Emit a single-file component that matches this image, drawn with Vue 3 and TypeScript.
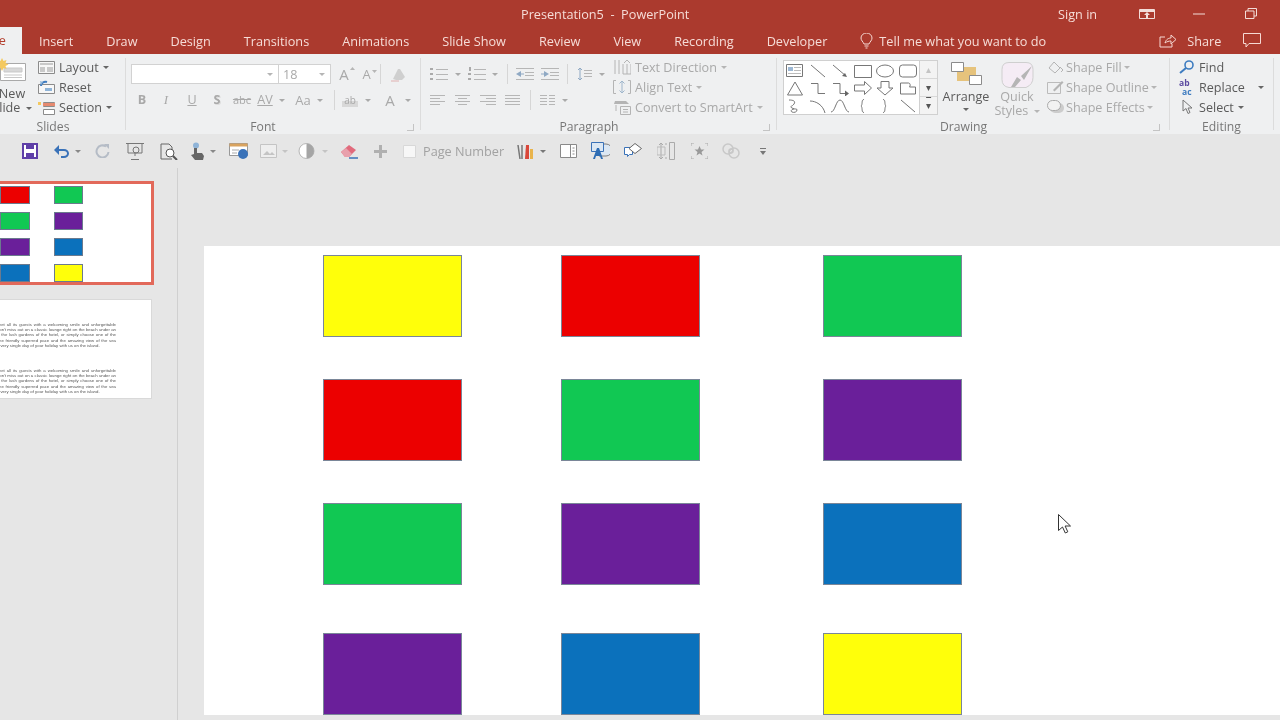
<template>
  <div class="app">
    <!-- title bar -->
    <header class="titlebar">
      <span class="doc-title">Presentation5 &nbsp;-&nbsp; PowerPoint</span>
      <span class="sign-in">Sign in</span>
      <svg class="win-display" width="16" height="10" viewBox="0 0 16 10">
        <path d="M.5.5h15v9H.5z" fill="none" stroke="#f3dcd8" />
        <path d="M1 1h14v2H1zM8 3l3 3H9v3H7V6H5z" fill="#f3dcd8" />
      </svg>
      <svg class="win-min" width="12" height="2" viewBox="0 0 12 2"><path d="M0 1h12" stroke="#f3dcd8" /></svg>
      <svg class="win-restore" width="12" height="11" viewBox="0 0 12 11">
        <path d="M.5 3h8.500v7.500H.5zM3 3V.5h8.500V8H9" fill="none" stroke="#f3dcd8" />
      </svg>
    </header>

    <!-- tabs -->
    <nav class="tabs">
      <span class="tab-file">File</span>
      <span v-for="tab in tabs" :key="tab" class="tab">{{ tab }}</span>
      <span class="tell-me">
        <svg width="13" height="16" viewBox="0 0 13 16">
          <path d="M4 11C3 8.500 1 7.500 1 5a5.500 5 0 0 1 11 0c0 2.500-2 3.500-3 6zM4.500 13h4M5.500 15h2" fill="none" stroke="#f6d9d4" />
        </svg>
        Tell me what you want to do
      </span>
      <span class="share">
        <svg width="18" height="15" viewBox="0 0 18 15">
          <path d="M6 4H1v10h12v-3M6 10c1-4 4-5 6-5V2l5 4.500-5 4.500V8c-2 0-4 .5-6 2z" fill="none" stroke="#f6d9d4" />
        </svg>
        <span>Share</span>
      </span>
      <svg class="comment" width="18" height="15" viewBox="0 0 18 15">
        <path d="M.5.5h17v10H6l-3 3.500v-3.500H.5z" fill="none" stroke="#f6d9d4" />
      </svg>
    </nav>

    <!-- ribbon -->
    <section class="ribbon">
      <div class="group g-slides">
        <div class="body">
          <div class="new-slide">
            <svg width="50" height="26" viewBox="0 0 50 26">
              <path d="M13.500 6.500h25v17h-25z" fill="#fff" stroke="#a9a9a9" />
              <path d="M17 11h18v4H17zM17 18h18M17 20.500h18" fill="#d8d8d8" stroke="#c9c9c9" />
              <path d="M15 1l1.500 3 3-1-1 3 3 1.500-3 1.500 1 3-3-1L15 14l-1.500-3-3 1 1-3-3-1.500 3-1.500-1-3 3 1z" fill="#f4c95f" />
            </svg>
            <span>New</span>
            <span>Slide <i class="caret dark"></i></span>
          </div>
          <div class="stack">
            <div class="line dark">
              <svg width="17" height="13" viewBox="0 0 17 13">
                <path d="M.5.5h16v12H.5z" fill="#f7f7f7" stroke="#8b8b8b" />
                <path d="M2 2h13v2H2zM2 6h5v5H2zM9 6h6v5H9z" fill="#c9c9c9" />
              </svg>
              Layout <i class="caret dark"></i>
            </div>
            <div class="line dark">
              <svg width="17" height="14" viewBox="0 0 17 14">
                <path d="M.5 4.500h16v9H.5z" fill="#f7f7f7" stroke="#8b8b8b" />
                <path d="M3 6c0-3 3-5 6-4" fill="none" stroke="#3e7cc0" stroke-width="2" />
                <path d="M2 1l3 1-2 3zM7 8h7v3H7z" fill="#8fb4d8" />
              </svg>
              Reset
            </div>
            <div class="line dark">
              <svg width="17" height="15" viewBox="0 0 17 15">
                <path d="M5.500 2.500h11v4h-11zM5.500 9.500h11v5h-11z" fill="#fff" stroke="#8b8b8b" />
                <path d="M5 3h12v3H5z" fill="#e68a70" />
                <path d="M0 2h3v3H0z" fill="#f4c95f" />
              </svg>
              Section <i class="caret dark"></i>
            </div>
          </div>
        </div>
        <div class="label">Slides</div>
      </div>

      <div class="group g-font">
        <div class="body rows">
          <div class="row">
            <div class="font-name"><i class="caret"></i></div>
            <div class="font-size">18 <i class="caret"></i></div>
            <template v-for="(t, i) in fontTop" :key="i">
              <span v-if="t.text" class="tool-text" :class="t.cls" :style="cell(t)">{{ t.text }}</span>
              <svg v-else :style="cell(t)" :width="t.w" :height="t.h" :viewBox="`0 0 ${t.w} ${t.h}`" v-html="t.body"></svg>
            </template>
          </div>
          <div class="row">
            <template v-for="(t, i) in fontBottom" :key="i">
              <span v-if="t.text" class="tool-text" :class="t.cls" :style="cell(t)">{{ t.text }}</span>
              <svg v-else :style="cell(t)" :width="t.w" :height="t.h" :viewBox="`0 0 ${t.w} ${t.h}`" v-html="t.body"></svg>
            </template>
          </div>
        </div>
        <div class="label">Font<i class="launcher"></i></div>
      </div>

      <div class="group g-para">
        <div class="body">
          <div class="rows para-left">
            <div class="row">
              <svg v-for="(t, i) in paraTop" :key="i" :style="cell(t)" :width="t.w" :height="t.h" :viewBox="`0 0 ${t.w} ${t.h}`" v-html="t.body"></svg>
            </div>
            <div class="row">
              <svg v-for="(t, i) in paraBottom" :key="i" :style="cell(t)" :width="t.w" :height="t.h" :viewBox="`0 0 ${t.w} ${t.h}`" v-html="t.body"></svg>
            </div>
          </div>
          <div class="stack">
            <div class="line">
              <svg width="18" height="16" viewBox="0 0 18 16">
                <path d="M2 1v14M6 1v14M14 5v10M10 5v10h8V5M11 4l3-3 3 3" fill="none" stroke="#b4b4b4" />
              </svg>
              Text Direction <i class="caret"></i>
            </div>
            <div class="line">
              <svg width="18" height="14" viewBox="0 0 18 14">
                <path d="M3 .5H.5v13H3M15 .5h2.500v13H15" fill="none" stroke="#b4b4b4" />
                <path d="M9 1v12M6.500 3.500L9 1l2.500 2.500M6.500 10.500L9 13l2.500-2.500" fill="none" stroke="#9fb6cc" />
              </svg>
              Align Text <i class="caret"></i>
            </div>
            <div class="line">
              <svg width="18" height="15" viewBox="0 0 18 15">
                <path d="M2 1h11l3 3H1z" fill="#b4b4b4" />
                <path d="M3 5v6M7.500 6.500h10v8h-10zM10 9.500h5M10 12h5" fill="none" stroke="#b4b4b4" />
              </svg>
              Convert to SmartArt <i class="caret"></i>
            </div>
          </div>
        </div>
        <div class="label">Paragraph<i class="launcher"></i></div>
      </div>

      <div class="group g-draw">
        <div class="body">
          <div class="gallery">
            <div class="shapes">
              <svg v-for="(s, i) in shapes" :key="i" width="20" height="16" viewBox="0 0 20 16" v-html="s"></svg>
            </div>
            <div class="scroll">
              <span class="faded">▴</span>
              <span>▾</span>
              <span class="more">▾</span>
            </div>
          </div>
          <div class="big arrange dark">
            <svg width="31" height="23" viewBox="0 0 31 23">
              <path d="M6 5h19v14H6z" fill="#e6c37c" />
              <path d="M.5.5h12v9H.5zM18.500 13.500h12v9h-12z" fill="#fff" stroke="#8b8b8b" />
            </svg>
            <span>Arrange</span>
            <i class="caret dark"></i>
          </div>
          <div class="big quick">
            <svg width="33" height="26" viewBox="0 0 33 26">
              <path d="M8 .5h17q7 0 7 7v8q0 7-7 10H8q-7-1-7-8v-10q0-7 7-7z" fill="#f5ecf5" stroke="#cfcfcf" />
              <path d="M10 25l6-10 4 3-6 7zM20 14l11-10-8 14z" fill="#b5b5b5" />
            </svg>
            <span>Quick</span>
            <span>Styles <i class="caret"></i></span>
          </div>
          <div class="stack shape-opts">
            <div class="line">
              <svg width="17" height="14" viewBox="0 0 17 14">
                <path d="M2 8l5-6 6 6-5 5zM13 7l3 3-2 2" fill="none" stroke="#b4b4b4" />
              </svg>
              Shape Fill <i class="caret"></i>
            </div>
            <div class="line">
              <svg width="17" height="14" viewBox="0 0 17 14">
                <path d="M.5 2.500h13v11H.5z" fill="none" stroke="#bbb" />
                <path d="M6 10l9-9 1.500 1.500-9 9z" fill="#b4b4b4" />
              </svg>
              Shape Outline <i class="caret"></i>
            </div>
            <div class="line">
              <svg width="17" height="14" viewBox="0 0 17 14">
                <rect x="3" y="3" width="14" height="10" rx="5" fill="#ccc" />
                <rect x=".5" y=".5" width="13" height="10" rx="5" fill="#f2f2f2" stroke="#aaa" />
              </svg>
              Shape Effects <i class="caret"></i>
            </div>
          </div>
        </div>
        <div class="label">Drawing<i class="launcher"></i></div>
      </div>

      <div class="group g-edit">
        <div class="body">
          <div class="stack">
            <div class="line dark">
              <svg width="16" height="14" viewBox="0 0 16 14">
                <circle cx="10" cy="5" r="4" fill="none" stroke="#3e7cc0" stroke-width="1.600" />
                <path d="M7 8l-6 5" stroke="#3e7cc0" stroke-width="2" />
              </svg>
              Find
            </div>
            <div class="line dark">
              <span class="ab-icon"><b>ab</b><b>ac</b></span>
              Replace <i class="caret dark replace-caret"></i>
            </div>
            <div class="line dark">
              <svg width="16" height="16" viewBox="0 0 16 16">
                <path d="M4 1v11l3-2.500 2 5 2-1-2-4.500h4z" fill="none" stroke="#777" />
              </svg>
              Select <i class="caret dark"></i>
            </div>
          </div>
        </div>
        <div class="label">Editing</div>
      </div>
    </section>

    <!-- quick access row -->
    <section class="qat">
      <template v-for="(t, i) in qat" :key="i">
        <span v-if="t.text" class="qat-text" :style="cell(t)">{{ t.text }}</span>
        <svg v-else :style="cell(t)" :width="t.w" :height="t.h" :viewBox="`0 0 ${t.w} ${t.h}`" v-html="t.body"></svg>
      </template>
    </section>

    <main class="workspace">
      <aside class="thumbs">
        <div class="thumb active">
          <div class="mini-grid">
            <span v-for="(c, i) in miniColors" :key="i" class="mini" :style="{ background: c }"></span>
          </div>
        </div>
        <div class="thumb second">
          <p>{{ thumbText }}</p>
          <p>{{ thumbText }}</p>
        </div>
      </aside>
      <div class="canvas">
        <div class="slide">
          <div v-for="(c, i) in slideColors" :key="i" class="box" :style="{ background: c }"></div>
        </div>
      </div>
    </main>

    <svg class="cursor" width="15" height="20" viewBox="0 0 15 20">
      <path d="M.5.500v16l4-3.500 2.800 6 2.500-1.200-2.700-5.800h5.400z" fill="#fff" stroke="#333" />
    </svg>
  </div>
</template>

<script setup lang="ts">
interface Tool {
  gap: number
  w: number
  h?: number
  body?: string
  text?: string
  cls?: string
}

const tabs = ['Insert', 'Draw', 'Design', 'Transitions', 'Animations', 'Slide Show', 'Review', 'View', 'Recording', 'Developer']

const G = '#b6b6b6'
const dd = (gap: number, color = '#aaa'): Tool => ({ gap, w: 6, h: 3, body: `<path d="M0 0h6L3 3z" fill="${color}"/>` })
const sep = (gap: number): Tool => ({ gap, w: 1, h: 20, body: '<path d="M.5 0v20" stroke="#d6d6d6"/>' })
const lines = (w: number, ys: number[], color = G) => ys.map((y) => `<path d="M0 ${y}.5h${w}" stroke="${color}"/>`).join('')

const fontTop: Tool[] = [
  { gap: 7, w: 12, text: 'A', cls: 'big-a' },
  { gap: 0, w: 5, h: 16, body: `<path d="M0 4l2.500-3L5 4z" fill="${G}"/>` },
  { gap: 6, w: 11, text: 'A', cls: 'small-a' },
  { gap: 0, w: 5, h: 16, body: `<path d="M0 4h5L2.500 7z" fill="${G}"/>` },
  sep(3),
  { gap: 9, w: 17, h: 15, body: `<path d="M3 12L8 2h2l5 8-3 3H6z" fill="#cfcfcf"/><path d="M1 14h8" stroke="#e0b0b0"/>` },
]

const fontBottom: Tool[] = [
  { gap: 5, w: 12, text: 'B', cls: 'bold' },
  { gap: 12, w: 12, text: 'I', cls: 'ital' },
  { gap: 14, w: 12, text: 'U', cls: 'under' },
  { gap: 13, w: 12, text: 'S', cls: 'shadow' },
  { gap: 9, w: 20, text: 'abc', cls: 'strike' },
  { gap: 5, w: 16, text: 'AV', cls: 'under' },
  dd(6),
  { gap: 8, w: 20, text: 'Aa', cls: 'mid' },
  dd(4),
  sep(11),
  { gap: 7, w: 16, text: 'ab', cls: 'hl' },
  dd(7),
  { gap: 12, w: 14, text: 'A', cls: 'big-a' },
  dd(8),
]

const paraTop: Tool[] = [
  { gap: 0, w: 18, h: 14, body: `<path d="M0 1h3v2H0zM0 6h3v2H0zM0 11h3v2H0z" fill="#aaa"/><path d="M6 2.500h12M6 7.500h12M6 12.500h12" stroke="${G}"/>` },
  dd(7),
  { gap: 7, w: 18, h: 14, body: `<path d="M1 0h2v4H1zM0 6h3v2H0zM0 11h3v2H0z" fill="#aaa"/><path d="M6 2.500h12M6 7.500h12M6 12.500h12" stroke="${G}"/>` },
  dd(6),
  sep(9),
  { gap: 8, w: 18, h: 12, body: `<path d="M0 6l5-3v6z" fill="#8fa9c4"/><path d="M5 6h3" stroke="#8fa9c4"/>` + lines(18, [0, 11]) + `<path d="M9 4.500h9M9 7.500h9" stroke="${G}"/>` },
  { gap: 7, w: 18, h: 12, body: `<path d="M8 6L3 3v6z" fill="#8fa9c4"/><path d="M0 6h3" stroke="#8fa9c4"/>` + lines(18, [0, 11]) + `<path d="M9 4.500h9M9 7.500h9" stroke="${G}"/>` },
  sep(8),
  { gap: 9, w: 15, h: 16, body: `<path d="M3 2v12M1 4l2-2 2 2M1 12l2 2 2-2" fill="none" stroke="#8fa9c4"/><path d="M7 4.500h8M7 7.500h8M7 10.500h8" stroke="${G}"/>` },
  dd(7),
]

const paraBottom: Tool[] = [
  { gap: 0, w: 15, h: 11, body: `<path d="M0 .5h15M0 3.500h10M0 6.500h15M0 9.500h10" stroke="${G}"/>` },
  { gap: 10, w: 15, h: 11, body: `<path d="M0 .5h15M3 3.500h9M0 6.500h15M3 9.500h9" stroke="${G}"/>` },
  { gap: 10, w: 16, h: 11, body: `<path d="M0 .5h16M6 3.500h10M0 6.500h16M6 9.500h10" stroke="${G}"/>` },
  { gap: 9, w: 15, h: 11, body: lines(15, [0, 3, 6, 9]) },
  sep(10),
  { gap: 9, w: 15, h: 11, body: `<path d="M0 .5h7M0 3.500h7M0 6.500h7M0 9.500h7M9 .5h6M9 3.500h6M9 6.500h6M9 9.500h6" stroke="${G}"/>` },
  dd(7),
]

const qat: Tool[] = [
  { gap: 22, w: 16, h: 16, body: '<path d="M1 1h14v14H1z" fill="#fff" stroke="#5f3fa8" stroke-width="2"/><path d="M4 1h8v5H4zM4 10h8v5H4z" fill="#5f3fa8"/>' },
  { gap: 16, w: 16, h: 13, body: '<path d="M3 5h7a4 3.500 0 0 1 0 7H7" fill="none" stroke="#3a72b8" stroke-width="2"/><path d="M0 5l5-5v10z" fill="#3a72b8"/>' },
  dd(5, '#888'),
  { gap: 14, w: 15, h: 14, body: '<path d="M11 2.500A6 6 0 1 0 13.500 8" fill="none" stroke="#b5bcc6" stroke-width="2"/><path d="M9 0h5v5z" fill="#b5bcc6"/>' },
  { gap: 16, w: 18, h: 17, body: '<path d="M0 .5h18M2 1v9h14V1M9 10v3M5 16.500h8" fill="none" stroke="#777"/><circle cx="10" cy="7" r="3" fill="none" stroke="#777"/>' },
  { gap: 16, w: 18, h: 17, body: '<path d="M12 16H1V1h8l3 3v3" fill="none" stroke="#666"/><circle cx="10" cy="10" r="4" fill="#fff" stroke="#555"/><path d="M13 13l4 4" stroke="#555" stroke-width="2"/>' },
  { gap: 11, w: 16, h: 18, body: '<circle cx="7" cy="3.500" r="3" fill="#8fb4d8"/><path d="M5 6h3v5h5l2 3-1 4H6l-4-5 3-1z" fill="#666"/>' },
  dd(5, '#888'),
  { gap: 13, w: 19, h: 16, body: '<path d="M.5.500h18v12H.5z" fill="#fff" stroke="#999"/><path d="M.5.500h18v3H.5z" fill="#d9a35f"/><circle cx="14" cy="11" r="5" fill="#3a72b8"/><path d="M3 7h7M3 10h5" stroke="#aaa"/>' },
  { gap: 12, w: 17, h: 14, body: '<path d="M.5.500h16v13H.5z" fill="#eee" stroke="#c4c4c4"/><path d="M3 11l4-4 3 3 2-2 3 3z" fill="#c4c4c4"/>' },
  dd(5, '#c4c4c4'),
  { gap: 10, w: 17, h: 16, body: '<circle cx="8.500" cy="8" r="7.500" fill="#fff" stroke="#b5b5b5"/><path d="M8.500 .5a7.500 7.500 0 0 1 0 15z" fill="#a5a5a5"/>' },
  dd(7, '#c4c4c4'),
  { gap: 12, w: 18, h: 15, body: '<path d="M1 8l8-7 7 5-7 7H5z" fill="#e16a7c"/><path d="M1 8l4 5h4l3-3-6-6z" fill="#e8a0ac"/><path d="M9 14h9" stroke="#3a72b8" stroke-width="1.500"/>' },
  { gap: 16, w: 13, h: 13, body: '<path d="M5 0h3v5h5v3H8v5H5V8H0V5h5z" fill="#b0b0b0"/>' },
  { gap: 16, w: 13, h: 13, body: '<path d="M.5.500h12v12H.5z" fill="#f7f7f7" stroke="#d8d8d8"/>' },
  { gap: 7, w: 84, text: 'Page Number' },
  { gap: 10, w: 16, h: 17, body: '<path d="M1 2l2 14M5 2v14" stroke="#777" stroke-width="1.500"/><path d="M9 2h3v14H8z" fill="#d9473a"/><path d="M13 6h3v10h-3z" fill="#e9b44c"/>' },
  dd(7, '#777'),
  { gap: 14, w: 17, h: 14, body: '<path d="M.5.500h16v13H.5zM10.500.5v13M12.500 4h2M12.500 7h2M12.500 10h2" fill="#fff" stroke="#8a8a8a"/>' },
  { gap: 14, w: 19, h: 18, body: '<path d="M8 2h7a4 4 0 0 1 0 12H8z" fill="#dbe7f3" stroke="#7f7f7f"/><path d="M.5.500h12v9H.5z" fill="#dbe7f3" stroke="#3a72b8"/><path d="M2 17L6 6h2l4 11h-2l-1-3H5l-1 3z" fill="#2e6db4"/>' },
  { gap: 14, w: 18, h: 16, body: '<path d="M.5 4.500h8v7h-3l-2 2v-2h-3z" fill="#fff" stroke="#3a72b8"/><path d="M11 .5l6.500 5-6.500 5-6-5z" fill="#fff" stroke="#666"/>' },
  { gap: 15, w: 18, h: 18, body: '<path d="M4 1v16M2 3l2-2 2 2M2 15l2 2 2-2M8 2h2M8 16h2M12.500.5h5v17h-5z" fill="none" stroke="#aaa"/><path d="M0 5h8v8H0z" fill="none" stroke="#bbb"/>' },
  { gap: 16, w: 17, h: 16, body: '<path d="M0 3V0h3M14 0h3v3M0 13v3h3M14 16h3v-3" fill="none" stroke="#aaa"/><path d="M8.500 3l1.500 3.500h3.500l-3 2.500 1 3.500-3-2-3 2 1-3.500-3-2.500H7z" fill="#999"/>' },
  { gap: 14, w: 18, h: 16, body: '<g fill="none" stroke="#c8c8c8" stroke-width="1.500"><circle cx="6" cy="6" r="5"/><circle cx="12" cy="10" r="5"/><circle cx="9" cy="8" r="2"/></g>' },
  { gap: 20, w: 6, h: 7, body: '<path d="M0 .5h6" stroke="#777"/><path d="M0 3h6L3 7z" fill="#777"/>' },
]

const S = 'fill="none" stroke="#777"'
const shapes: string[] = [
  '<path d="M1.500 1.500h16v12h-16z" fill="#fff" stroke="#777"/><path d="M3 4h5v4H3z" fill="#9db8d4"/><path d="M9 4.500h7M9 7.500h7M3 10.500h13" stroke="#bbb"/>',
  `<path d="M3 2l14 12" ${S}/>`,
  `<path d="M3 2l13 11" ${S}/><path d="M17 14l-5-1 3-3z" fill="#666"/>`,
  `<path d="M1.500 2.500h17v12h-17z" ${S}/>`,
  `<ellipse cx="10" cy="8" rx="8.500" ry="6" ${S}/>`,
  `<rect x="1.500" y="2" width="17" height="12" rx="3" ${S}/>`,
  `<path d="M10 2l7.500 13h-15z" ${S}/>`,
  `<path d="M3 3.500h7v10h7" ${S}/>`,
  `<path d="M3 3.500h7v10h6" ${S}/><path d="M19 13.500l-4-3v6z" fill="#666"/>`,
  `<path d="M1.500 5h10V1.500L18.500 8l-7 6.500V11h-10z" ${S}/>`,
  `<path d="M6 1.500h8V8h4l-8 7-8-7h4z" ${S}/>`,
  `<path d="M2.500 14V3h8c2 0 2 3 1 4h6v7z" ${S}/>`,
  `<path d="M4 2c4 0 7 1 5 4S4 8 7 10s5 0 5 2-3 3-5 2 0-3 2-3" ${S}/>`,
  `<path d="M2 3c6 0 13 4 15 12" ${S}/>`,
  `<path d="M1 14C5 14 6 2 10 2s5 12 9 12" ${S}/>`,
  `<path d="M11 1.500c-3 0-1 5-3 6.500 2 1.500 0 6.500 3 6.500" ${S}/>`,
  `<path d="M8 1.500c3 0 1 5 3 6.500-2 1.500 0 6.500-3 6.500" ${S}/>`,
  `<path d="M3 2l14 12" ${S}/>`,
]

function cell(t: Tool) {
  return { marginLeft: `${t.gap}px`, width: `${t.w}px` }
}

const R = '#ec0000'
const Gn = '#11c853'
const P = '#6a1f9a'
const B = '#0b71bc'
const Y = '#ffff0a'
const miniColors = [R, Gn, Gn, P, P, B, B, Y]
const slideColors = [Y, R, Gn, R, Gn, P, Gn, P, B, P, B, Y]

const thumbText =
  'Our friendly hotel staff will greet all its guests with a welcoming smile and unforgettable Greek hospitality. As a guest don\'t miss out on a classic lounge right on the beach under an umbrella, take a stroll through the lush gardens of the hotel, or simply choose one of the many quiet corners to enjoy the friendly superred pace and the amazing view of the sea from your own private terrace every single day of your holiday with us on the island.'
</script>

<style scoped>
.app {
  position: relative;
  width: 1280px;
  height: 720px;
  overflow: hidden;
  background: #e6e6e6;
  font-family: "Open Sans", "Liberation Sans", sans-serif;
  font-size: 12.6px;
  color: #a9a9a9;
  filter: blur(0.35px);
}
svg {
  flex: none;
  display: block;
}

.titlebar {
  display: flex;
  align-items: center;
  height: 27px;
  padding-left: 521px;
  background: #ab3a2e;
  color: #f6dcd7;
  font-size: 12.7px;
}
.doc-title {
  width: 537px;
}
.sign-in {
  width: 81px;
}
.win-min {
  margin-left: 38px;
}
.win-restore {
  margin-left: 40px;
}

.tabs {
  display: flex;
  align-items: center;
  height: 27px;
  background: #ab3a2e;
  color: #f6dcd7;
  font-size: 12.7px;
}
.tab-file {
  width: 40px;
  height: 27px;
  margin: 0 17px 0 -18px;
  padding-top: 4px;
  box-sizing: border-box;
  text-align: right;
  padding-right: 16px;
  background: #eff0f1;
  color: #b4402f;
}
.tab {
  margin-right: 33px;
}
.tell-me {
  display: flex;
  align-items: center;
  gap: 6px;
  width: 299px;
}
.share {
  display: flex;
  align-items: center;
  gap: 10px;
  width: 84px;
}

.ribbon {
  display: flex;
  height: 80px;
  background: #eff0f1;
}
.group {
  position: relative;
  display: flex;
  flex-direction: column;
  flex: none;
  box-sizing: border-box;
}
.group::after {
  content: "";
  position: absolute;
  right: 0;
  top: 4px;
  bottom: 4px;
  width: 1px;
  background: #dcdcdc;
}
.body {
  display: flex;
  height: 66px;
  padding-top: 3px;
  box-sizing: border-box;
}
.label {
  position: relative;
  height: 14px;
  line-height: 14px;
  text-align: center;
  font-size: 12.2px;
  color: #777;
}
.launcher {
  position: absolute;
  right: 7px;
  top: 4px;
  width: 6px;
  height: 6px;
  border: 1px solid #c4c4c4;
  border-width: 0 1px 1px 0;
}
.g-slides {
  width: 126px;
}
.g-slides .label {
  padding-right: 20px;
}
.g-font {
  width: 295px;
  padding-left: 5px;
}
.g-font .label {
  padding-right: 26px;
}
.g-para {
  width: 356px;
  padding-left: 9px;
}
.g-para .label {
  padding-right: 29px;
}
.g-draw {
  width: 393px;
}
.g-draw .label {
  padding-right: 20px;
}
.g-edit {
  width: 104px;
  padding-left: 9px;
}
.g-edit .label {
  padding-right: 10px;
}
.g-draw .launcher {
  right: 10px;
}

.caret {
  display: inline-block;
  width: 0;
  height: 0;
  margin-left: 2px;
  vertical-align: middle;
  border: 3px solid transparent;
  border-top-color: #b5b5b5;
  border-bottom-width: 0;
}
.caret.dark {
  border-top-color: #666;
}

.new-slide {
  display: flex;
  flex-direction: column;
  align-items: center;
  flex: none;
  width: 50px;
  margin-left: -13px;
  color: #5a5a5a;
  line-height: 14px;
}
.new-slide svg {
  margin-bottom: 4px;
}

.stack {
  display: flex;
  flex-direction: column;
}
.g-slides .stack {
  margin-left: 1px;
}
.line {
  display: flex;
  align-items: center;
  gap: 4px;
  height: 20px;
  white-space: nowrap;
}
.line .caret {
  margin-left: 0;
}
.dark {
  color: #5a5a5a;
}

.rows {
  display: flex;
  flex-direction: column;
  gap: 6px;
  padding-top: 7px;
}
.body.rows {
  padding-top: 10px;
}
.para-left {
  width: 183px;
  flex: none;
  padding-top: 7px;
}
.row {
  display: flex;
  align-items: center;
  height: 20px;
}
.font-name,
.font-size {
  display: flex;
  align-items: center;
  justify-content: flex-end;
  height: 20px;
  box-sizing: border-box;
  padding-right: 5px;
  background: #fff;
  border: 1px solid #d2d2d2;
}
.font-name {
  width: 148px;
}
.font-size {
  justify-content: space-between;
  width: 52px;
  padding-left: 4px;
  border-left: 0;
}
.tool-text {
  display: block;
  text-align: center;
  flex: none;
  line-height: 20px;
}
.bold {
  font-weight: 700;
}
.ital {
  font-style: italic;
  font-family: "Liberation Serif", serif;
  font-size: 13px;
}
.under {
  text-decoration: underline;
}
.shadow {
  font-weight: 700;
  text-shadow: 1px 1px 0 #ddd;
}
.strike {
  text-decoration: line-through;
  font-size: 11px;
}
.mid {
  font-size: 13px;
}
.big-a {
  font-size: 15px;
}
.small-a {
  font-size: 13px;
}
.hl {
  font-size: 10px;
  line-height: 14px;
  background: linear-gradient(#0000 60%, #d8d8d8 60%);
}

.gallery {
  display: flex;
  width: 155px;
  height: 55px;
  margin: 3px 0 0 6px;
  background: #fff;
  border: 1px solid #d0d0d0;
  box-sizing: border-box;
  flex: none;
}
.shapes {
  display: grid;
  grid-template-columns: repeat(6, 22.5px);
  grid-auto-rows: 17.5px;
  align-items: center;
  justify-items: center;
  width: 137px;
  padding-top: 1px;
}
.scroll {
  display: flex;
  flex-direction: column;
  width: 17px;
  background: #f3f3f3;
  border-left: 1px solid #d0d0d0;
}
.scroll span {
  flex: 1;
  text-align: center;
  font-size: 10px;
  line-height: 17px;
  color: #555;
  border-bottom: 1px solid #d8d8d8;
}
.scroll span:last-child {
  border-bottom: 0;
}
.scroll .faded {
  color: #c4c4c4;
}
.scroll .more {
  text-decoration: overline;
}
.big {
  display: flex;
  flex-direction: column;
  align-items: center;
  flex: none;
  width: 50px;
  line-height: 14px;
}
.arrange {
  margin: 5px 0 0 3px;
}
.arrange svg {
  margin-bottom: 5px;
}
.arrange .caret {
  margin: 4px 0 0;
}
.quick {
  margin: 5px 0 0 1px;
}
.quick svg {
  margin-bottom: 2px;
}
.shape-opts {
  margin-left: 5px;
}
.shape-opts .line {
  gap: 2px;
}
.ab-icon {
  display: flex;
  flex-direction: column;
  width: 16px;
  font-size: 8.500px;
  line-height: 9px;
  color: #5b4aa0;
}
.ab-icon b:last-child {
  color: #3e7cc0;
  padding-left: 3px;
}
.replace-caret {
  margin-left: 9px !important;
}

.qat {
  display: flex;
  align-items: center;
  height: 34px;
  background: #e6e6e6;
}
.qat-text {
  flex: none;
  white-space: nowrap;
  color: #a2a2a2;
  font-size: 12.7px;
}

.workspace {
  display: flex;
  height: 552px;
}
.thumbs {
  flex: none;
  width: 178px;
  box-sizing: border-box;
  padding-top: 13px;
  border-right: 1px solid #d0d0d0;
}
.thumb {
  margin-left: -20px;
  background: #fff;
  box-sizing: border-box;
  overflow: hidden;
}
.active {
  width: 174px;
  height: 104px;
  border: 3px solid #e2695a;
  padding: 2px 0 0 17px;
}
.mini-grid {
  display: grid;
  grid-template-columns: 30px 29px;
  grid-auto-rows: 18px;
  column-gap: 24px;
  row-gap: 8px;
}
.mini {
  box-sizing: border-box;
  border: 1px solid #6b7a8e;
}
.second {
  width: 172px;
  height: 100px;
  margin-top: 14px;
  padding-top: 22px;
  border: 1px solid #d9d9d9;
}
.second p {
  width: 175px;
  height: 26px;
  margin: 0 0 20px -40px;
  font-family: "Liberation Sans", sans-serif;
  font-size: 4.300px;
  line-height: 5.200px;
  color: #555;
  text-align: justify;
  overflow: hidden;
}
.canvas {
  flex: 1;
  padding: 78px 0 5px 26px;
}
.slide {
  display: grid;
  grid-template-columns: 238px 262px 139px;
  grid-template-rows: 124px 124px 130px 82px;
  height: 469px;
  box-sizing: border-box;
  padding: 9px 0 0 119px;
  background: #fff;
}
.box {
  box-sizing: border-box;
  width: 139px;
  height: 82px;
  border: 1px solid #7a8698;
}
.cursor {
  position: absolute;
  left: 1058px;
  top: 514px;
}
</style>

<style>
html,
body {
  margin: 0;
  overflow: hidden;
}
</style>
